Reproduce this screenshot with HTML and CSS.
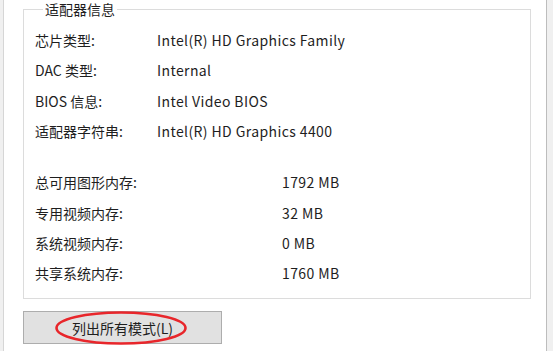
FILE: index.html
```html
<!DOCTYPE html>
<html lang="zh-CN">

<head>
    <meta charset="UTF-8">
    <meta name="viewport" content="width=device-width, initial-scale=1.0">
    <title>适配器属性</title>
    <link rel="stylesheet" href="styles.css">
</head>

<body>
    <div class="panel">
        <fieldset class="group">
            <legend>适配器信息</legend>
            <div class="info">
                <span>芯片类型:</span><span>Intel(R) HD Graphics Family</span>
                <span>DAC 类型:</span><span>Internal</span>
                <span>BIOS 信息:</span><span>Intel Video BIOS</span>
                <span>适配器字符串:</span><span>Intel(R) HD Graphics 4400</span>
            </div>
            <div class="info memory">
                <span>总可用图形内存:</span><span>1792 MB</span>
                <span>专用视频内存:</span><span>32 MB</span>
                <span>系统视频内存:</span><span>0 MB</span>
                <span>共享系统内存:</span><span>1760 MB</span>
            </div>
        </fieldset>
        <div class="btn">
            <button>列出所有模式(L)</button>
            <svg class="mark" width="134" height="36" viewBox="0 0 134 36">
                <ellipse cx="67" cy="18" rx="64.5" ry="15.5" fill="none" stroke="#e8262b" stroke-width="2.6" />
            </svg>
        </div>
    </div>
</body>

</html>
```

FILE: styles.css
```css
* {
    padding: 0;
    margin: 0;
    box-sizing: border-box;
}

body {
    background: #f0f0f0;
    font-family: "Noto Sans CJK SC", "Noto Sans", sans-serif;
    font-size: 14px;
    color: #1e1e1e;
    height: 351px;
    overflow: hidden;
}

.panel {
    margin-left: 3px;
    width: 544px;
    height: 351px;
    background: white;
    border-left: 1px solid #d6d6d6;
    border-right: 1px solid #bdbdbd;
    padding-left: 19px;
}

.group {
    width: 508px;
    border: 1px solid #dcdcdc;
    padding: 7px 0 10px 11px;
}

.group legend {
    margin-left: 8px;
    padding: 0 2px;
    line-height: 18px;
}

.info {
    display: grid;
    grid-template-columns: 122px auto;
    grid-auto-rows: 30.3px;
    align-items: center;
}

.info span:nth-child(even) {
    letter-spacing: 0.4px;
}

.memory {
    grid-template-columns: 247px auto;
    margin-top: 21px;
}

.btn {
    position: relative;
    margin-top: 12px;
    width: 199px;
}

.btn button {
    width: 199px;
    height: 33px;
    background: #e1e1e1;
    border: 1px solid #adadad;
    font-family: "Noto Sans CJK SC", "Noto Sans", sans-serif;
    font-size: 14px;
    color: #1e1e1e;
}

.mark {
    position: absolute;
    left: 31px;
    top: -1px;
}
```
